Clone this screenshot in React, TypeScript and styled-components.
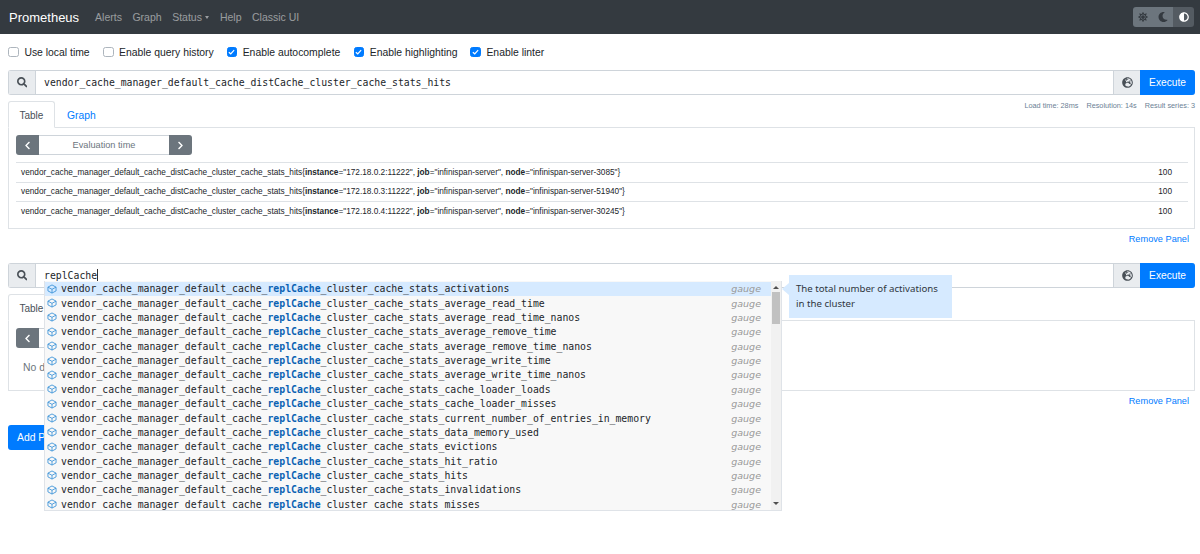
import React from 'react';
import styled, { createGlobalStyle } from 'styled-components';
import { FaSearch, FaSun, FaMoon, FaAdjust, FaGlobeEurope, FaChevronLeft, FaChevronRight } from 'react-icons/fa';

const Global = createGlobalStyle`
  html, body { margin: 0; padding: 0; background: #fff; }
  body { font-family: "Liberation Sans", Arial, sans-serif; font-size: 10.4px; color: #212529; height: 554px; overflow: hidden; }
  * { box-sizing: border-box; }
`;

const Nav = styled.nav`
  height: 34px; background: #343a40; display: flex; align-items: center; padding: 0 6px 0 9px;
`;
const Brand = styled.span`font-size: 13px; color: #fff; margin-right: 16px;`;
const NavLink = styled.span`font-size: 10.5px; color: rgba(255,255,255,.5); margin-right: 10.5px; display: inline-flex; align-items: center;`;
const Caret = styled.i`
  display: inline-block; margin-left: 3.5px; border-top: 3px solid currentColor; border-left: 2.75px solid transparent; border-right: 2.75px solid transparent;
`;
const ThemeGroup = styled.div`margin-left: auto; display: flex; height: 20px; border-radius: 3px; overflow: hidden;`;
const ThemeBtn = styled.span`
  width: 21px; display: flex; align-items: center; justify-content: center; font-size: 10px;
  background: #545b62; color: #fff;
`;
const ThemeIcons = styled.div`width: 40px; background: #6c757d; color: #343a40; display: flex; align-items: center; justify-content: space-between; padding: 0 5px; font-size: 10px;`;

const Container = styled.main`padding: 0 5px 0 8px;`;
const Options = styled.div`height: 36px; display: flex; align-items: center;`;
const Option = styled.label<{ $mr: number }>`display: flex; align-items: center; font-size: 10.4px; margin-right: ${p => p.$mr}px; color: #212529;`;
const Box = styled.span<{ $on?: boolean }>`
  width: 10.5px; height: 10.5px; margin-left: 0.4px; margin-right: 5.5px; border-radius: 2.5px; display: flex; align-items: center; justify-content: center;
  background: ${p => p.$on ? '#007bff' : '#fff'}; border: 1px solid ${p => p.$on ? '#007bff' : '#adb5bd'};
`;
const Panel = styled.section`position: relative;`;
const InputGroup = styled.div`display: flex; height: 25px; border: 1px solid #ced4da; border-radius: 3px; border-right: 0;`;
const Prepend = styled.div`width: 27px; background: #e9ecef; border-right: 1px solid #ced4da; display: flex; align-items: center; justify-content: center; color: #495057; font-size: 10.5px;`;
const Expr = styled.div`flex: 1; padding-left: 8px; font-family: "DejaVu Sans Mono", monospace; font-size: 9.8px; line-height: 23px; color: #212529; background: #fff;`;
const Cursor = styled.span`border-left: 1px solid #333; height: 12px; display: inline-block; vertical-align: -2px;`;
const Globe = styled.div`width: 27px; background: #e9ecef; border-left: 1px solid #ced4da; display: flex; align-items: center; justify-content: center; color: #495057; font-size: 11px;`;
const Execute = styled.div`width: 55px; margin: -1px 0; background: #007bff; color: #fff; display: flex; align-items: center; justify-content: center; font-size: 10.2px; border-radius: 0 3px 3px 0;`;
const Stats = styled.div`height: 6px; display: flex; justify-content: flex-end; gap: 8px; font-size: 7.3px; color: #6c7f95; line-height: 22px;`;
const Tabs = styled.div`display: flex; height: 27px; border-bottom: 1px solid #dee2e6;`;
const Tab = styled.div<{ $active?: boolean }>`
  width: ${p => p.$active ? 47 : 50}px; padding-left: ${p => p.$active ? 10.5 : 11}px; font-size: ${p => p.$active ? 10 : 10.3}px; line-height: 27px; height: 27px;
  color: ${p => p.$active ? '#495057' : '#007bff'}; background: ${p => p.$active ? '#fff' : 'transparent'};
  border: 1px solid ${p => p.$active ? '#dee2e6' : 'transparent'}; border-bottom-color: ${p => p.$active ? '#fff' : 'transparent'}; border-radius: 3px 3px 0 0;
`;
const TabBody = styled.div<{ $h: number }>`height: ${p => p.$h}px; border: 1px solid #dee2e6; border-top: 0; padding: 7px 6px 0 7px;`;
const TimeGroup = styled.div`display: flex; width: 176px; height: 20px;`;
const TimeBtn = styled.div<{ $side: string }>`
  width: 23px; background: #6c757d; color: #fff; font-size: 9px; display: flex; align-items: center; justify-content: center;
  border-radius: ${p => p.$side === 'l' ? '3px 0 0 3px' : '0 3px 3px 0'};
`;
const TimeField = styled.div`flex: 1; border-top: 1px solid #ced4da; border-bottom: 1px solid #ced4da; color: #6c757d; font-size: 9.2px; line-height: 18px; text-align: center;`;
const Rows = styled.div`margin-top: 7px;`;
const Row = styled.div`height: 19.6px; border-top: 1px solid #dee2e6; display: flex; align-items: center; justify-content: space-between; padding: 0 16px 0 5px; font-size: 8.26px; color: #212529;`;
const Value = styled.span`font-size: 8.26px;`;
const RemoveRow = styled.div<{ $h: number }>`height: ${p => p.$h}px; text-align: right; padding: 5px 6px 0 0; font-size: 9.2px; color: #007bff; line-height: 11px;`;
const NoData = styled.div`margin-top: 14px; font-size: 10.4px; line-height: 12px; color: #6c757d; padding-left: 7px;`;
const AddBtn = styled.div`width: 80px; height: 25px; background: #007bff; color: #fff; font-size: 10.4px; line-height: 25px; padding-left: 9px; border-radius: 3px; margin-top: 4px;`;

const Dropdown = styled.div`
  position: absolute; left: 36px; top: 18px; width: 738px; height: 230px; background: #f8f8f8; border: 1px solid #dfe3e8; border-top: 0; display: flex; overflow: hidden;
  font-family: "DejaVu Sans Mono", monospace; font-size: 9.8px; z-index: 5;
`;
const List = styled.div`flex: 1; min-width: 0; padding-top: 0.6px;`;
const Item = styled.div<{ $sel?: boolean }>`
  height: 14.37px; display: flex; align-items: center; padding-left: 2px; white-space: pre; color: #212529; background: ${p => p.$sel ? '#d6eaff' : 'transparent'};
`;
const Cube = styled.svg`width: 10px; height: 10px; margin-right: 4px; flex: none;`;
const Match = styled.b`color: #0b62b3; font-weight: 700;`;
const Kind = styled.span`margin-left: auto; margin-right: 10px; font-style: italic; color: #999; font-family: "DejaVu Sans", sans-serif; font-size: 9.5px;`;
const Scroll = styled.div`width: 10px; background: #f1f1f1; position: relative; display: flex; flex-direction: column; align-items: center; justify-content: space-between; padding: 5px 0;`;
const Thumb = styled.div`position: absolute; top: 10.5px; left: 1px; width: 8px; height: 32.5px; background: #c1c1c1;`;
const ArrowUp = styled.i`border-bottom: 3px solid #505050; border-left: 3px solid transparent; border-right: 3px solid transparent;`;
const ArrowDown = styled.i`border-top: 3px solid #505050; border-left: 3px solid transparent; border-right: 3px solid transparent;`;
const Info = styled.div`
  position: absolute; left: 781px; top: 12px; width: 163px; height: 43px; background: #d6eaff; color: #2f3640; padding: 7px 7px 0 7px; font-family: "Noto Sans", sans-serif; font-size: 9.66px; line-height: 14.5px; z-index: 5;
  &::before { content: ""; position: absolute; left: -7px; top: 8px; border-right: 7px solid #d6eaff; border-top: 6px solid transparent; border-bottom: 6px solid transparent; }
`;

const METRIC = 'vendor_cache_manager_default_cache_distCache_cluster_cache_stats_hits';
const series = [['172.18.0.2', '3085'], ['172.18.0.3', '51940'], ['172.18.0.4', '30245']];
const suffixes = ['activations', 'average_read_time', 'average_read_time_nanos', 'average_remove_time', 'average_remove_time_nanos', 'average_write_time', 'average_write_time_nanos', 'cache_loader_loads', 'cache_loader_misses', 'current_number_of_entries_in_memory', 'data_memory_used', 'evictions', 'hit_ratio', 'hits', 'invalidations', 'misses'];

const CubeIcon = () => (
  <Cube viewBox="0 0 16 16" fill="none" stroke="#3d94d8" strokeWidth="1.4" strokeLinejoin="round">
    <path d="M8 1.5 14.5 5v6L8 14.5 1.5 11V5z" />
    <path d="M1.5 5 8 8.5 14.5 5M8 8.5v6" />
  </Cube>
);

const Check = () => (
  <svg width="7" height="7" viewBox="0 0 8 8"><path fill="#fff" d="M6.56.75 7.5 1.7 3.2 6.6.5 4.2l.9-1 1.7 1.5z" /></svg>
);

const App = () => (
  <>
    <Global />
    <Nav>
      <Brand>Prometheus</Brand>
      <NavLink>Alerts</NavLink>
      <NavLink>Graph</NavLink>
      <NavLink>Status<Caret /></NavLink>
      <NavLink>Help</NavLink>
      <NavLink>Classic UI</NavLink>
      <ThemeGroup>
        <ThemeIcons><FaSun /><FaMoon /></ThemeIcons>
        <ThemeBtn><FaAdjust /></ThemeBtn>
      </ThemeGroup>
    </Nav>
    <Container>
      <Options>
        <Option $mr={13}><Box />Use local time</Option>
        <Option $mr={12.5}><Box />Enable query history</Option>
        <Option $mr={13}><Box $on><Check /></Box>Enable autocomplete</Option>
        <Option $mr={12.5}><Box $on><Check /></Box>Enable highlighting</Option>
        <Option $mr={0}><Box $on><Check /></Box>Enable linter</Option>
      </Options>
      <Panel>
        <InputGroup>
          <Prepend><FaSearch /></Prepend>
          <Expr>{METRIC}</Expr>
          <Globe><FaGlobeEurope /></Globe>
          <Execute>Execute</Execute>
        </InputGroup>
        <Stats><span>Load time: 28ms</span><span>Resolution: 14s</span><span>Result series: 3</span></Stats>
        <Tabs>
          <Tab $active>Table</Tab>
          <Tab>Graph</Tab>
        </Tabs>
        <TabBody $h={101}>
          <TimeGroup>
            <TimeBtn $side="l"><FaChevronLeft /></TimeBtn>
            <TimeField>Evaluation time</TimeField>
            <TimeBtn $side="r"><FaChevronRight /></TimeBtn>
          </TimeGroup>
          <Rows>
            {series.map(([ip, node]) => (
              <Row key={ip}>
                <span>{METRIC}{'{'}<b>instance</b>="{ip}:11222", <b>job</b>="infinispan-server", <b>node</b>="infinispan-server-{node}"{'}'}</span>
                <Value>100</Value>
              </Row>
            ))}
          </Rows>
        </TabBody>
        <RemoveRow $h={34}>Remove Panel</RemoveRow>
      </Panel>
      <Panel>
        <InputGroup>
          <Prepend><FaSearch /></Prepend>
          <Expr>replCache<Cursor /></Expr>
          <Globe><FaGlobeEurope /></Globe>
          <Execute>Execute</Execute>
        </InputGroup>
        <Stats />
        <Tabs>
          <Tab $active>Table</Tab>
          <Tab>Graph</Tab>
        </Tabs>
        <TabBody $h={70}>
          <TimeGroup>
            <TimeBtn $side="l"><FaChevronLeft /></TimeBtn>
            <TimeField>Evaluation time</TimeField>
            <TimeBtn $side="r"><FaChevronRight /></TimeBtn>
          </TimeGroup>
          <NoData>No data queried yet</NoData>
        </TabBody>
        <RemoveRow $h={30}>Remove Panel</RemoveRow>
        <Dropdown>
          <List>
            {suffixes.map((s, i) => (
              <Item key={s} $sel={i === 0}>
                <CubeIcon />vendor_cache_manager_default_cache_<Match>replCache</Match>_cluster_cache_stats_{s}
                <Kind>gauge</Kind>
              </Item>
            ))}
          </List>
          <Scroll><ArrowUp /><Thumb /><ArrowDown /></Scroll>
        </Dropdown>
        <Info>The total number of activations in the cluster</Info>
      </Panel>
      <AddBtn>Add Panel</AddBtn>
    </Container>
  </>
);

export default App;
